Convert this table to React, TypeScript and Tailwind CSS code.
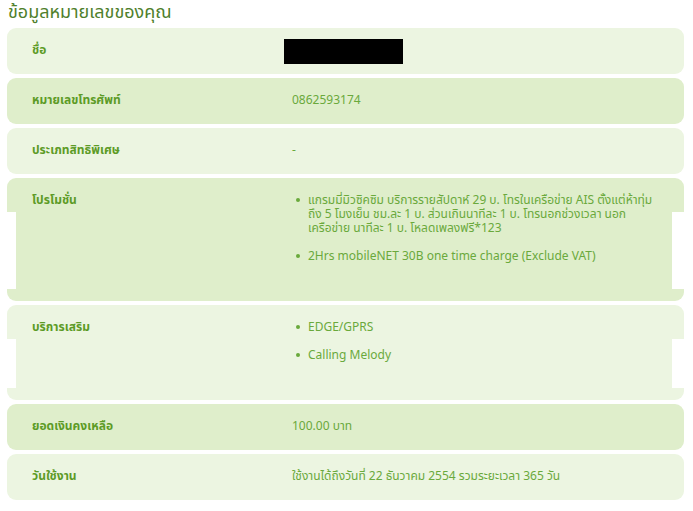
import React from "react";

type RowProps = {
  label: string;
  dark?: boolean;
  tall?: boolean;
  children: React.ReactNode;
};

function Row({ label, dark, tall, children }: RowProps) {
  const bg = dark ? "bg-[#dfeecb]" : "bg-[#ecf5e1]";
  return (
    <div className="grid w-[677px] ml-[7px]">
      <div className="[grid-area:1/1] flex flex-col">
        {tall ? (
          <>
            <div className={`h-[34px] rounded-t-[9px] ${bg}`} />
            <div className={`flex-1 ml-[9px] mr-[12px] ${bg}`} />
            <div className={`h-[12px] rounded-b-[9px] ${bg}`} />
          </>
        ) : (
          <div className={`flex-1 rounded-[9px] ${bg}`} />
        )}
      </div>
      <div
        className={`[grid-area:1/1] flex min-h-[46px] pt-[15px] ${tall ? "pb-[38px]" : "pb-[17px]"}`}
      >
        <div className="w-[285px] shrink-0 pl-[25px] text-[12px] leading-[14px] font-bold text-[#5c9b26]">
          {label}
        </div>
        <div className="flex-1 pr-[8px] text-[12px] leading-[14px] text-[#6aa93c]">
          {children}
        </div>
      </div>
    </div>
  );
}

function Bullets({ items }: { items: React.ReactNode[] }) {
  return (
    <ul className="flex flex-col gap-[14px] pl-[4px]">
      {items.map((t, i) => (
        <li key={i} className="flex">
          <span className="w-[12px] shrink-0 flex pt-[5px]">
            <span className="block w-[4px] h-[4px] rounded-full bg-[#6aa93c]" />
          </span>
          <span>{t}</span>
        </li>
      ))}
    </ul>
  );
}

export default function App() {
  return (
    <div
      className="w-[693px] h-[511px] bg-white overflow-hidden"
      style={{ fontFamily: 'Tahoma, "Noto Sans Thai", "Noto Sans", "DejaVu Sans", sans-serif' }}
    >
      <div className="pl-[8px] pt-[2px] h-[28px] text-[18px] leading-[22px] text-[#4f7f2c]">
        ข้อมูลหมายเลขของคุณ
      </div>
      <div className="flex flex-col gap-[4px]">
        <Row label="ชื่อ">
          <div className="w-[119px] h-[25px] bg-black -mt-[4px] -mb-[7px] -ml-[8px]" />
        </Row>
        <Row label="หมายเลขโทรศัพท์" dark>
          0862593174
        </Row>
        <Row label="ประเภทสิทธิพิเศษ">-</Row>
        <Row label="โปรโมชั่น" dark tall>
          <Bullets
            items={[
              <>
                แกรมมี่มิวซิคซิม บริการรายสัปดาห์ 29 บ. โทรในเครือข่าย AIS ตั้งแต่ห้าทุ่ม
                <br />
                ถึง 5 โมงเย็น ชม.ละ 1 บ. ส่วนเกินนาทีละ 1 บ. โทรนอกช่วงเวลา นอก
                <br />
                เครือข่าย นาทีละ 1 บ. โหลดเพลงฟรี*123
              </>,
              "2Hrs mobileNET 30B one time charge (Exclude VAT)",
            ]}
          />
        </Row>
        <Row label="บริการเสริม" tall>
          <Bullets items={["EDGE/GPRS", "Calling Melody"]} />
        </Row>
        <Row label="ยอดเงินคงเหลือ" dark>
          100.00 บาท
        </Row>
        <Row label="วันใช้งาน">ใช้งานได้ถึงวันที่ 22 ธันวาคม 2554 รวมระยะเวลา 365 วัน</Row>
      </div>
    </div>
  );
}
